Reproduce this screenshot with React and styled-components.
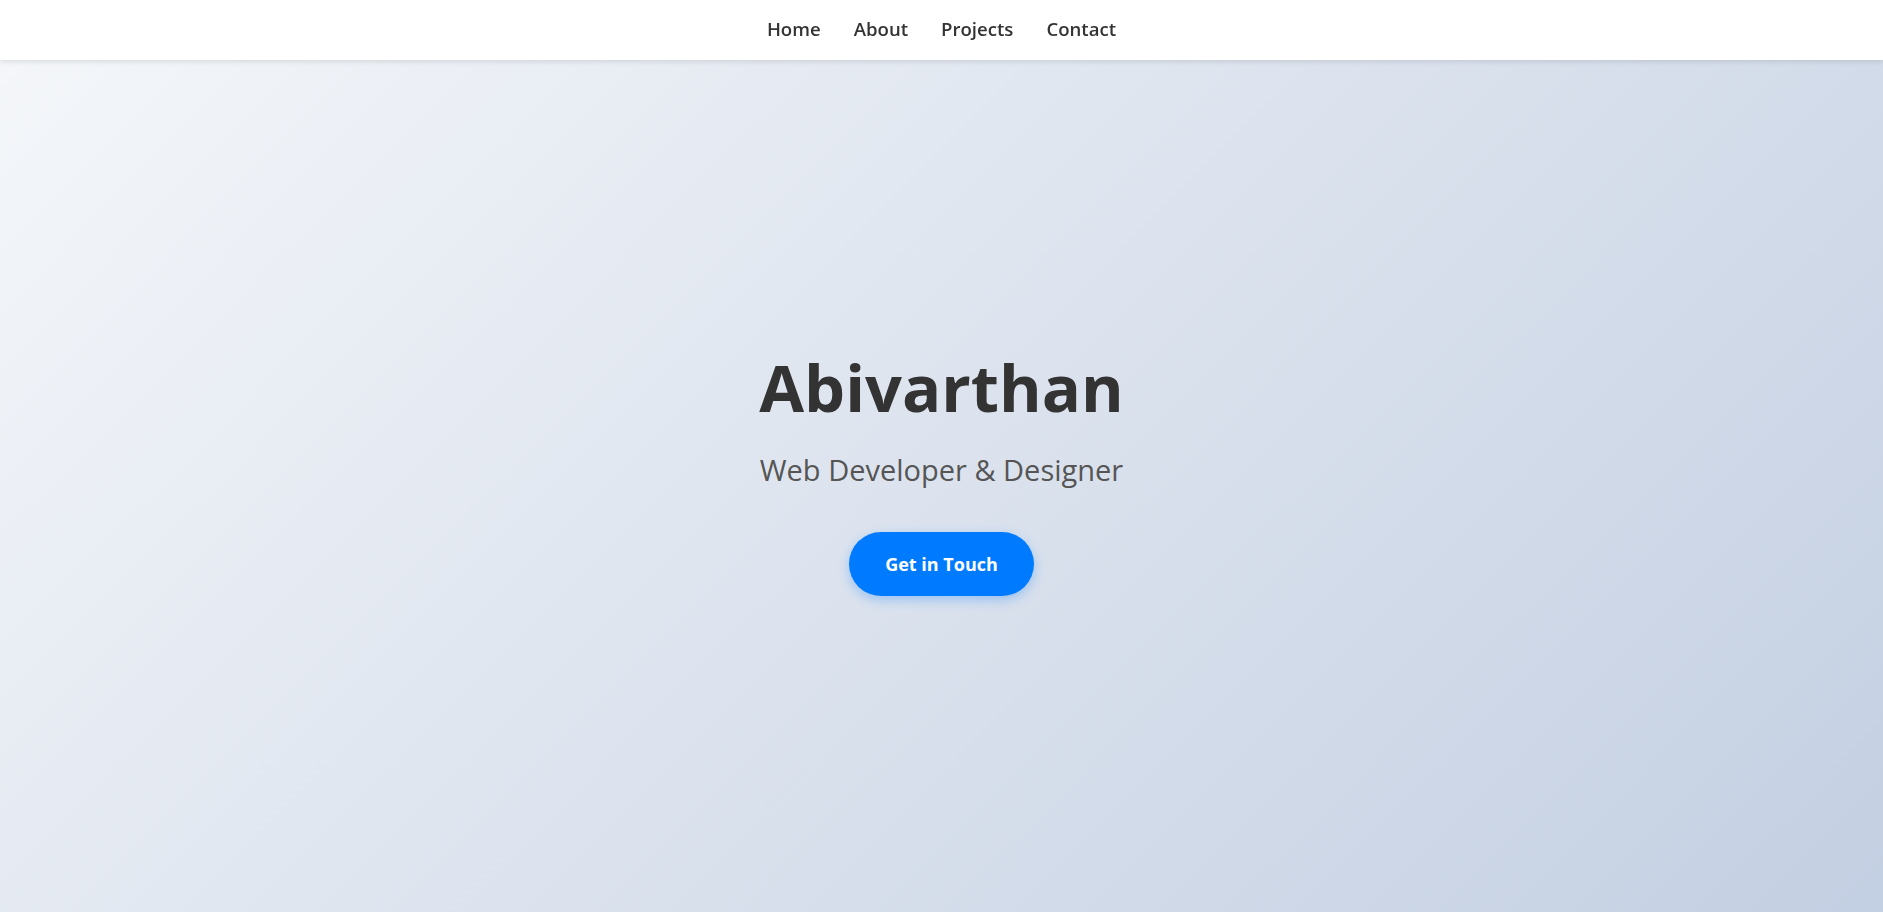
import React from 'react';
import styled, { createGlobalStyle } from 'styled-components';

const GlobalStyle = createGlobalStyle`
    * { box-sizing: border-box; }
    html, body { margin: 0; padding: 0; }
    body {
        font-family: "Open Sans", "Noto Sans", sans-serif;
        color: #333;
        background: linear-gradient(135deg, #f5f7fa 0%, #c3cfe2 100%);
        min-height: 100vh;
    }
`;

const StyledNav = styled.nav`
    position: fixed;
    top: 0;
    left: 0;
    right: 0;
    height: 60px;
    background: #fff;
    box-shadow: 0 2px 5px rgba(0, 0, 0, 0.1);
    display: flex;
    justify-content: center;
    align-items: center;
    gap: 33px;
    z-index: 10;

    a {
        font-size: 18.6px;
        font-weight: 600;
        color: #333;
        text-decoration: none;
        line-height: 1;
        padding-bottom: 2px; }
`;

const StyledHero = styled.section`
    height: 100vh;
    padding-top: 32px;
    display: flex;
    flex-direction: column;
    align-items: center;
    justify-content: center;
    text-align: center;

    .hero__title {
        margin: 0;
        font-size: 65px;
        font-weight: 700;
        line-height: 1.2;
        color: #333; }

    .hero__subtitle {
        margin: 27px 0 44px;
        font-size: 29px;
        font-weight: 400;
        line-height: 1.2;
        color: #555; }
`;

const StyledButton = styled.a`
    display: inline-flex;
    align-items: center;
    justify-content: center;
    height: 64px;
    padding: 0 36px;
    border-radius: 32px;
    background: #007bff;
    color: #fff;
    font-size: 18px;
    font-weight: 700;
    text-decoration: none;
    box-shadow: 0 4px 12px rgba(0, 123, 255, 0.3);
`;

const App = () => {
    const links = ['Home', 'About', 'Projects', 'Contact'];

    return (
        <>
            <GlobalStyle />
            <StyledNav>
                {links.map(link => (
                    <a key={link} href={`#${link.toLowerCase()}`}>{link}</a>
                ))}
            </StyledNav>
            <StyledHero id="home">
                <h1 className="hero__title">Abivarthan</h1>
                <p className="hero__subtitle">Web Developer &amp; Designer</p>
                <StyledButton href="#contact">Get in Touch</StyledButton>
            </StyledHero>
        </>
    );
};

export default App;
